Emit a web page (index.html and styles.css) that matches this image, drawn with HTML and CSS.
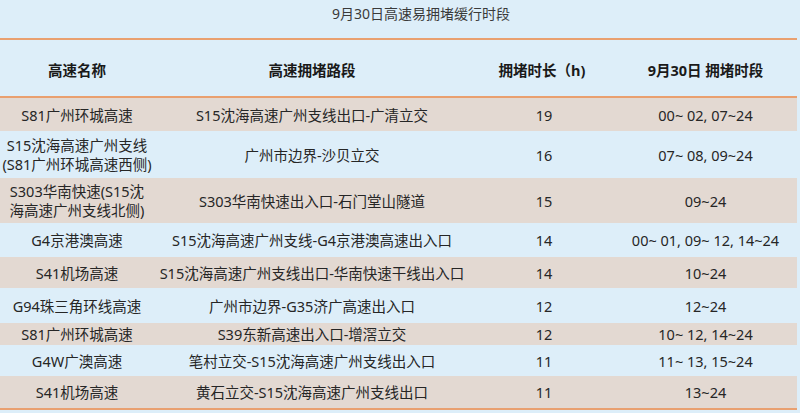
FILE: index.html
```html
<!DOCTYPE html>
<html lang="zh-CN">
<head>
<meta charset="utf-8">
<link rel="stylesheet" href="styles.css">
</head>
<body>
<div class="page">
  <div class="title">9月30日高速易拥堵缓行时段</div>
  <div class="table">
    <div class="row head">
      <div>高速名称</div>
      <div>高速拥堵路段</div>
      <div>拥堵时长（h)</div>
      <div>9月30日 拥堵时段</div>
    </div>
    <div class="row beige h1">
      <div>S81广州环城高速</div>
      <div>S15沈海高速广州支线出口-广清立交</div>
      <div class="num">19</div>
      <div>00~ 02, 07~24</div>
    </div>
    <div class="row blue h2">
      <div class="two">S15沈海高速广州支线<br>(S81广州环城高速西侧)</div>
      <div>广州市边界-沙贝立交</div>
      <div class="num">16</div>
      <div>07~ 08, 09~24</div>
    </div>
    <div class="row beige h3">
      <div class="two">S303华南快速(S15沈<br>海高速广州支线北侧)</div>
      <div>S303华南快速出入口-石门堂山隧道</div>
      <div class="num">15</div>
      <div>09~24</div>
    </div>
    <div class="row blue h4">
      <div>G4京港澳高速</div>
      <div>S15沈海高速广州支线-G4京港澳高速出入口</div>
      <div class="num">14</div>
      <div>00~ 01, 09~ 12, 14~24</div>
    </div>
    <div class="row beige h5">
      <div>S41机场高速</div>
      <div>S15沈海高速广州支线出口-华南快速干线出入口</div>
      <div class="num">14</div>
      <div>10~24</div>
    </div>
    <div class="row blue h6">
      <div>G94珠三角环线高速</div>
      <div>广州市边界-G35济广高速出入口</div>
      <div class="num">12</div>
      <div>12~24</div>
    </div>
    <div class="row beige h7">
      <div>S81广州环城高速</div>
      <div>S39东新高速出入口-增滘立交</div>
      <div class="num">12</div>
      <div>10~ 12, 14~24</div>
    </div>
    <div class="row blue h8">
      <div>G4W广澳高速</div>
      <div>笔村立交-S15沈海高速广州支线出入口</div>
      <div class="num">11</div>
      <div>11~ 13, 15~24</div>
    </div>
    <div class="row beige h9 last">
      <div>S41机场高速</div>
      <div>黄石立交-S15沈海高速广州支线出口</div>
      <div class="num">11</div>
      <div>13~24</div>
    </div>
  </div>
</div>
</body>
</html>
```

FILE: styles.css
```css
html, body {
  margin: 0;
  padding: 0;
  background: #ddeef9;
}
body {
  width: 800px;
  height: 413px;
  overflow: hidden;
  font-family: "Noto Sans", "Noto Sans CJK SC", sans-serif;
  color: #262626;
}
.page {
  display: flex;
  flex-direction: column;
}
.title {
  height: 38px;
  box-sizing: border-box;
  padding-top: 4px;
  padding-left: 42px;
  font-size: 14px;
  line-height: 20px;
  text-align: center;
  color: #3a3a3a;
}
.table {
  width: 797px;
  display: flex;
  flex-direction: column;
}
.row {
  display: grid;
  grid-template-columns: 154px 316px 144px 183px;
  align-items: center;
  text-align: center;
  font-size: 14.5px;
  line-height: 18px;
  white-space: nowrap;
}
.row > div {
  display: flex;
  justify-content: center;
  align-items: center;
}
.row > .two {
  line-height: 19px;
}
.row > .num {
  padding-left: 4px;
}
.head {
  height: 60px;
  box-sizing: border-box;
  border-top: 2px solid #e9a070;
  border-bottom: 2px solid #e9a070;
  padding-top: 3px;
  font-weight: bold;
  color: #1a1a1a;
}
.beige { background: #e3d9d2; }
.blue { background: #ddeef9; }
.h1 { height: 33px; }
.h2 { height: 47px; }
.h3 { height: 45px; }
.h4 { height: 34px; }
.h5 { height: 31px; }
.h6 { height: 35px; }
.h7 { height: 22px; }
.h8 { height: 31px; }
.h9 { height: 32px; }
.last {
  border-bottom: 2px solid #e9a070;
}
```
